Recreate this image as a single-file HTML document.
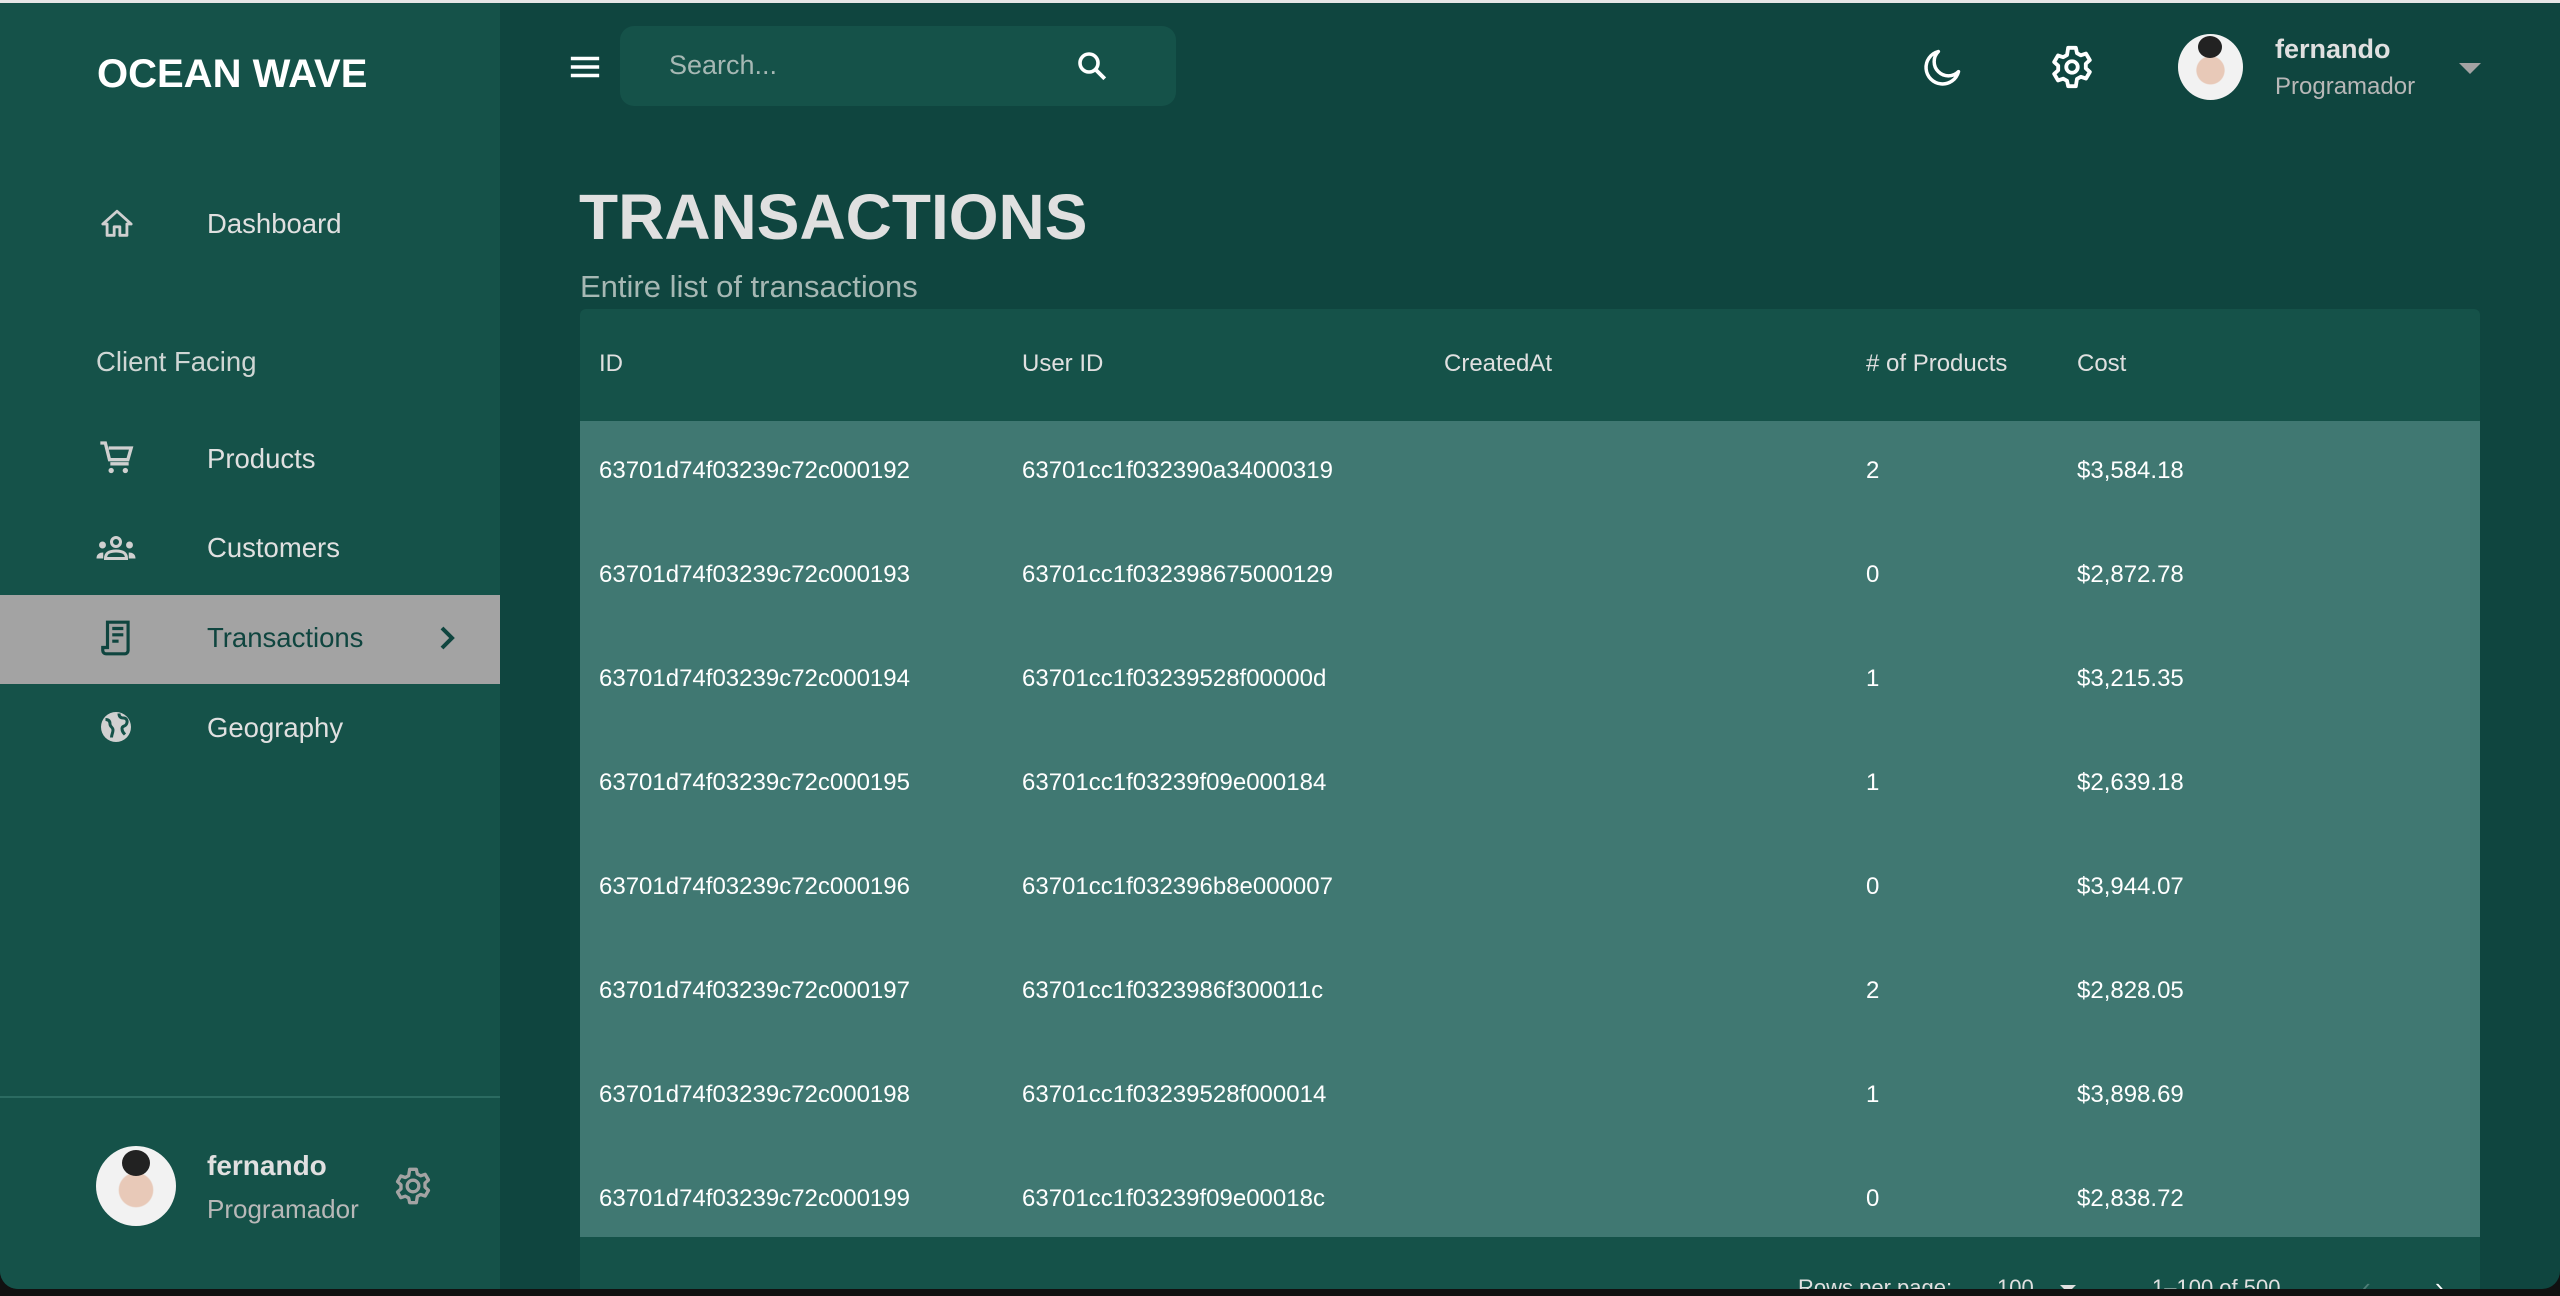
<!DOCTYPE html>
<html><head><meta charset="utf-8"><style>
*{margin:0;padding:0;box-sizing:border-box}
body{width:2560px;height:1296px;background:#111;overflow:hidden;font-family:"Liberation Sans",sans-serif;position:relative}
#app{position:absolute;left:0;top:0;width:2560px;height:1289px;background:#0f453f;border-radius:0 0 18px 18px;overflow:hidden;border-top:3px solid #e6e6e6}
#side{position:absolute;left:0;top:0;width:500px;height:1289px;background:#155249}
.abs{position:absolute;white-space:nowrap}
.nav{color:#e0e0e0;font-size:27.5px}
.td{position:absolute;color:#fff;font-size:24px}
</style></head><body><div id="app">
<div id="side">
 <div class="abs" style="left:97px;top:49px;font-size:40px;font-weight:bold;color:#fff">OCEAN WAVE</div>
 <svg class="abs" style="left:100px;top:204px" width="34" height="34" viewBox="0 0 24 24"><path d="M12 3L2 12h3v8h5v-6h4v6h5v-8h3z" fill="none" stroke="#d0d0d0" stroke-width="2" stroke-linejoin="round"/></svg>
 <div class="abs nav" style="left:207px;top:205px">Dashboard</div>
 <div class="abs nav" style="left:96px;top:343px;color:#cfd6d4">Client Facing</div>
 <svg class="abs" style="left:97px;top:435px" width="40" height="40" viewBox="0 0 24 24"><path d="M2 3h3l2.5 10h11l2-7H7" fill="none" stroke="#d0d0d0" stroke-width="2"/><path d="M8 15.5h11" stroke="#d0d0d0" stroke-width="2"/><circle cx="8.5" cy="19.5" r="1.6" fill="#d0d0d0"/><circle cx="17" cy="19.5" r="1.6" fill="#d0d0d0"/></svg>
 <div class="abs nav" style="left:207px;top:440px">Products</div>
 <svg class="abs" style="left:95px;top:527px" width="42" height="36" viewBox="0 0 28 24"><circle cx="14" cy="8" r="3" fill="none" stroke="#d0d0d0" stroke-width="2"/><circle cx="5" cy="10" r="2.3" fill="#d0d0d0"/><circle cx="23" cy="10" r="2.3" fill="#d0d0d0"/><path d="M7 19c0-4 3-5 7-5s7 1 7 5z" fill="none" stroke="#d0d0d0" stroke-width="2"/><path d="M1 19c0-3 2-4 4.5-4v4zM27 19c0-3-2-4-4.5-4v4z" fill="#d0d0d0"/></svg>
 <div class="abs nav" style="left:207px;top:529px">Customers</div>
 <div class="abs" style="left:0;top:592px;width:500px;height:89px;background:#a3a3a3"></div>
 <svg class="abs" style="left:98px;top:615px" width="38" height="40" viewBox="0 0 24 24"><path d="M6 2v16H3v2c0 1 1 2 2 2h12c1 0 2-1 2-2V2z" fill="none" stroke="#0f453f" stroke-width="2"/><path d="M9 6h7M9 10h7M9 14h4" stroke="#0f453f" stroke-width="2"/></svg>
 <div class="abs nav" style="left:207px;top:619px;color:#0f453f">Transactions</div>
 <svg class="abs" style="left:436px;top:623px" width="20" height="24" viewBox="0 0 10 12"><path d="M3 1l5 5-5 5" fill="none" stroke="#0f453f" stroke-width="2"/></svg>
 <svg class="abs" style="left:98px;top:706px" width="36" height="36" viewBox="0 0 24 24"><circle cx="12" cy="12" r="10" fill="#d0d0d0"/><path d="M5 7c2 0 3 1 3 3s2 2 2 4-1 3-1 5M14 3c0 2 1 3 3 3s3 2 2 4-3 1-3 3 1 3 2 4" fill="none" stroke="#155249" stroke-width="2"/></svg>
 <div class="abs nav" style="left:207px;top:709px">Geography</div>
 <div class="abs" style="left:0;top:1093px;width:500px;height:2px;background:#2b6b61"></div>
 <div class="abs" style="left:96px;top:1143px;width:80px;height:80px;border-radius:50%;background:radial-gradient(circle at 50% 55%,#e8c9b8 0 28%,#f2f2f2 30%);overflow:hidden"><div style="position:absolute;left:26px;top:4px;width:28px;height:26px;border-radius:50%;background:#222"></div></div>
 <div class="abs" style="left:207px;top:1147px;font-size:28px;font-weight:bold;color:#e0e0e0">fernando</div>
 <div class="abs" style="left:207px;top:1191px;font-size:26px;color:#b8b8b8">Programador</div>
 <svg class="abs" style="left:393px;top:1163px" width="40" height="40" viewBox="0 0 24 24"><path d="M12 8.5a3.5 3.5 0 100 7 3.5 3.5 0 000-7z" fill="none" stroke="#a3a3a3" stroke-width="2"/><path d="M10 2h4l.6 2.8 2 1.1 2.7-.9 2 3.4-2.1 1.9v2.4l2.1 1.9-2 3.4-2.7-.9-2 1.1L14 22h-4l-.6-2.8-2-1.1-2.7.9-2-3.4 2.1-1.9V11.3L2.7 9.4l2-3.4 2.7.9 2-1.1z" fill="none" stroke="#a3a3a3" stroke-width="2" stroke-linejoin="round"/></svg>
</div>
<svg class="abs" style="left:568px;top:49px" width="34" height="30" viewBox="0 0 24 20"><path d="M2 4h20M2 10h20M2 16h20" stroke="#fff" stroke-width="2.4"/></svg>
<div class="abs" style="left:620px;top:23px;width:556px;height:80px;border-radius:14px;background:#155249"></div>
<div class="abs" style="left:669px;top:47px;font-size:27px;color:#a6b8b4">Search...</div>
<svg class="abs" style="left:1074px;top:45px" width="36" height="36" viewBox="0 0 24 24"><circle cx="10" cy="10" r="6" fill="none" stroke="#fff" stroke-width="2.4"/><path d="M14.5 14.5l6 6" stroke="#fff" stroke-width="2.6"/></svg>
<svg class="abs" style="left:1920px;top:43px" width="44" height="44" viewBox="0 0 24 24"><path d="M10 3a9 9 0 1011 11 7 7 0 01-11-11z" fill="none" stroke="#fff" stroke-width="1.9" stroke-linejoin="round"/></svg>
<svg class="abs" style="left:2049px;top:41px" width="46" height="46" viewBox="0 0 24 24"><path d="M12 9a3 3 0 100 6 3 3 0 000-6z" fill="none" stroke="#fff" stroke-width="2"/><path d="M10 2h4l.6 2.8 2 1.1 2.7-.9 2 3.4-2.1 1.9v2.4l2.1 1.9-2 3.4-2.7-.9-2 1.1L14 22h-4l-.6-2.8-2-1.1-2.7.9-2-3.4 2.1-1.9V11.3L2.7 9.4l2-3.4 2.7.9 2-1.1z" fill="none" stroke="#fff" stroke-width="2" stroke-linejoin="round"/></svg>
<div class="abs" style="left:2178px;top:31px;width:65px;height:66px;border-radius:50%;background:radial-gradient(circle at 50% 55%,#e8c9b8 0 28%,#f2f2f2 30%);overflow:hidden"><div style="position:absolute;left:20px;top:2px;width:24px;height:22px;border-radius:50%;background:#222"></div></div>
<div class="abs" style="left:2275px;top:31px;font-size:27px;font-weight:bold;color:#e0e0e0">fernando</div>
<div class="abs" style="left:2275px;top:70px;font-size:24px;color:#b8b8b8">Programador</div>
<div class="abs" style="left:2459px;top:60px;width:0;height:0;border-left:11px solid transparent;border-right:11px solid transparent;border-top:11px solid #a3a3a3"></div>
<div class="abs" style="left:579px;top:177px;font-size:64px;font-weight:bold;color:#e0e0e0">TRANSACTIONS</div>
<div class="abs" style="left:580px;top:266px;font-size:31px;color:#a6b8b4">Entire list of transactions</div>
<div class="abs" style="left:580px;top:306px;width:1900px;height:985px;background:#155249;border-radius:6px 6px 0 0;overflow:hidden">
 <div class="td" style="left:19px;top:41px;color:#e0e0e0">ID</div>
 <div class="td" style="left:442px;top:41px;color:#e0e0e0">User ID</div>
 <div class="td" style="left:864px;top:41px;color:#e0e0e0">CreatedAt</div>
 <div class="td" style="left:1286px;top:41px;color:#e0e0e0"># of Products</div>
 <div class="td" style="left:1497px;top:41px;color:#e0e0e0">Cost</div>
 <div style="position:absolute;left:0;top:112px;width:1900px;height:816px;background:#407872;overflow:hidden">
  <div style="position:absolute;left:0;top:0;width:1900px">
   <div style="position:relative;height:104px"><div class="td" style="left:19px;top:36px">63701d74f03239c72c000192</div><div class="td" style="left:442px;top:36px">63701cc1f032390a34000319</div><div class="td" style="left:1286px;top:36px">2</div><div class="td" style="left:1497px;top:36px">$3,584.18</div></div>
   <div style="position:relative;height:104px"><div class="td" style="left:19px;top:36px">63701d74f03239c72c000193</div><div class="td" style="left:442px;top:36px">63701cc1f032398675000129</div><div class="td" style="left:1286px;top:36px">0</div><div class="td" style="left:1497px;top:36px">$2,872.78</div></div>
   <div style="position:relative;height:104px"><div class="td" style="left:19px;top:36px">63701d74f03239c72c000194</div><div class="td" style="left:442px;top:36px">63701cc1f03239528f00000d</div><div class="td" style="left:1286px;top:36px">1</div><div class="td" style="left:1497px;top:36px">$3,215.35</div></div>
   <div style="position:relative;height:104px"><div class="td" style="left:19px;top:36px">63701d74f03239c72c000195</div><div class="td" style="left:442px;top:36px">63701cc1f03239f09e000184</div><div class="td" style="left:1286px;top:36px">1</div><div class="td" style="left:1497px;top:36px">$2,639.18</div></div>
   <div style="position:relative;height:104px"><div class="td" style="left:19px;top:36px">63701d74f03239c72c000196</div><div class="td" style="left:442px;top:36px">63701cc1f032396b8e000007</div><div class="td" style="left:1286px;top:36px">0</div><div class="td" style="left:1497px;top:36px">$3,944.07</div></div>
   <div style="position:relative;height:104px"><div class="td" style="left:19px;top:36px">63701d74f03239c72c000197</div><div class="td" style="left:442px;top:36px">63701cc1f0323986f300011c</div><div class="td" style="left:1286px;top:36px">2</div><div class="td" style="left:1497px;top:36px">$2,828.05</div></div>
   <div style="position:relative;height:104px"><div class="td" style="left:19px;top:36px">63701d74f03239c72c000198</div><div class="td" style="left:442px;top:36px">63701cc1f03239528f000014</div><div class="td" style="left:1286px;top:36px">1</div><div class="td" style="left:1497px;top:36px">$3,898.69</div></div>
   <div style="position:relative;height:104px"><div class="td" style="left:19px;top:36px">63701d74f03239c72c000199</div><div class="td" style="left:442px;top:36px">63701cc1f03239f09e00018c</div><div class="td" style="left:1286px;top:36px">0</div><div class="td" style="left:1497px;top:36px">$2,838.72</div></div>
  </div>
 </div>
 <div class="td" style="left:1218px;top:966px;font-size:22px;color:#e0e0e0">Rows per page:</div>
 <div class="td" style="left:1417px;top:966px;font-size:22px;color:#e0e0e0">100</div>
 <div class="abs" style="left:1480px;top:976px;border-left:8px solid transparent;border-right:8px solid transparent;border-top:8px solid #e0e0e0"></div>
 <div class="td" style="left:1572px;top:966px;font-size:22px;color:#e0e0e0">1–100 of 500</div>
 <div class="td" style="left:1782px;top:963px;font-size:26px;color:#4d7d76">‹</div>
 <div class="td" style="left:1855px;top:963px;font-size:26px;color:#fff">›</div>
</div>
</div></body></html>
